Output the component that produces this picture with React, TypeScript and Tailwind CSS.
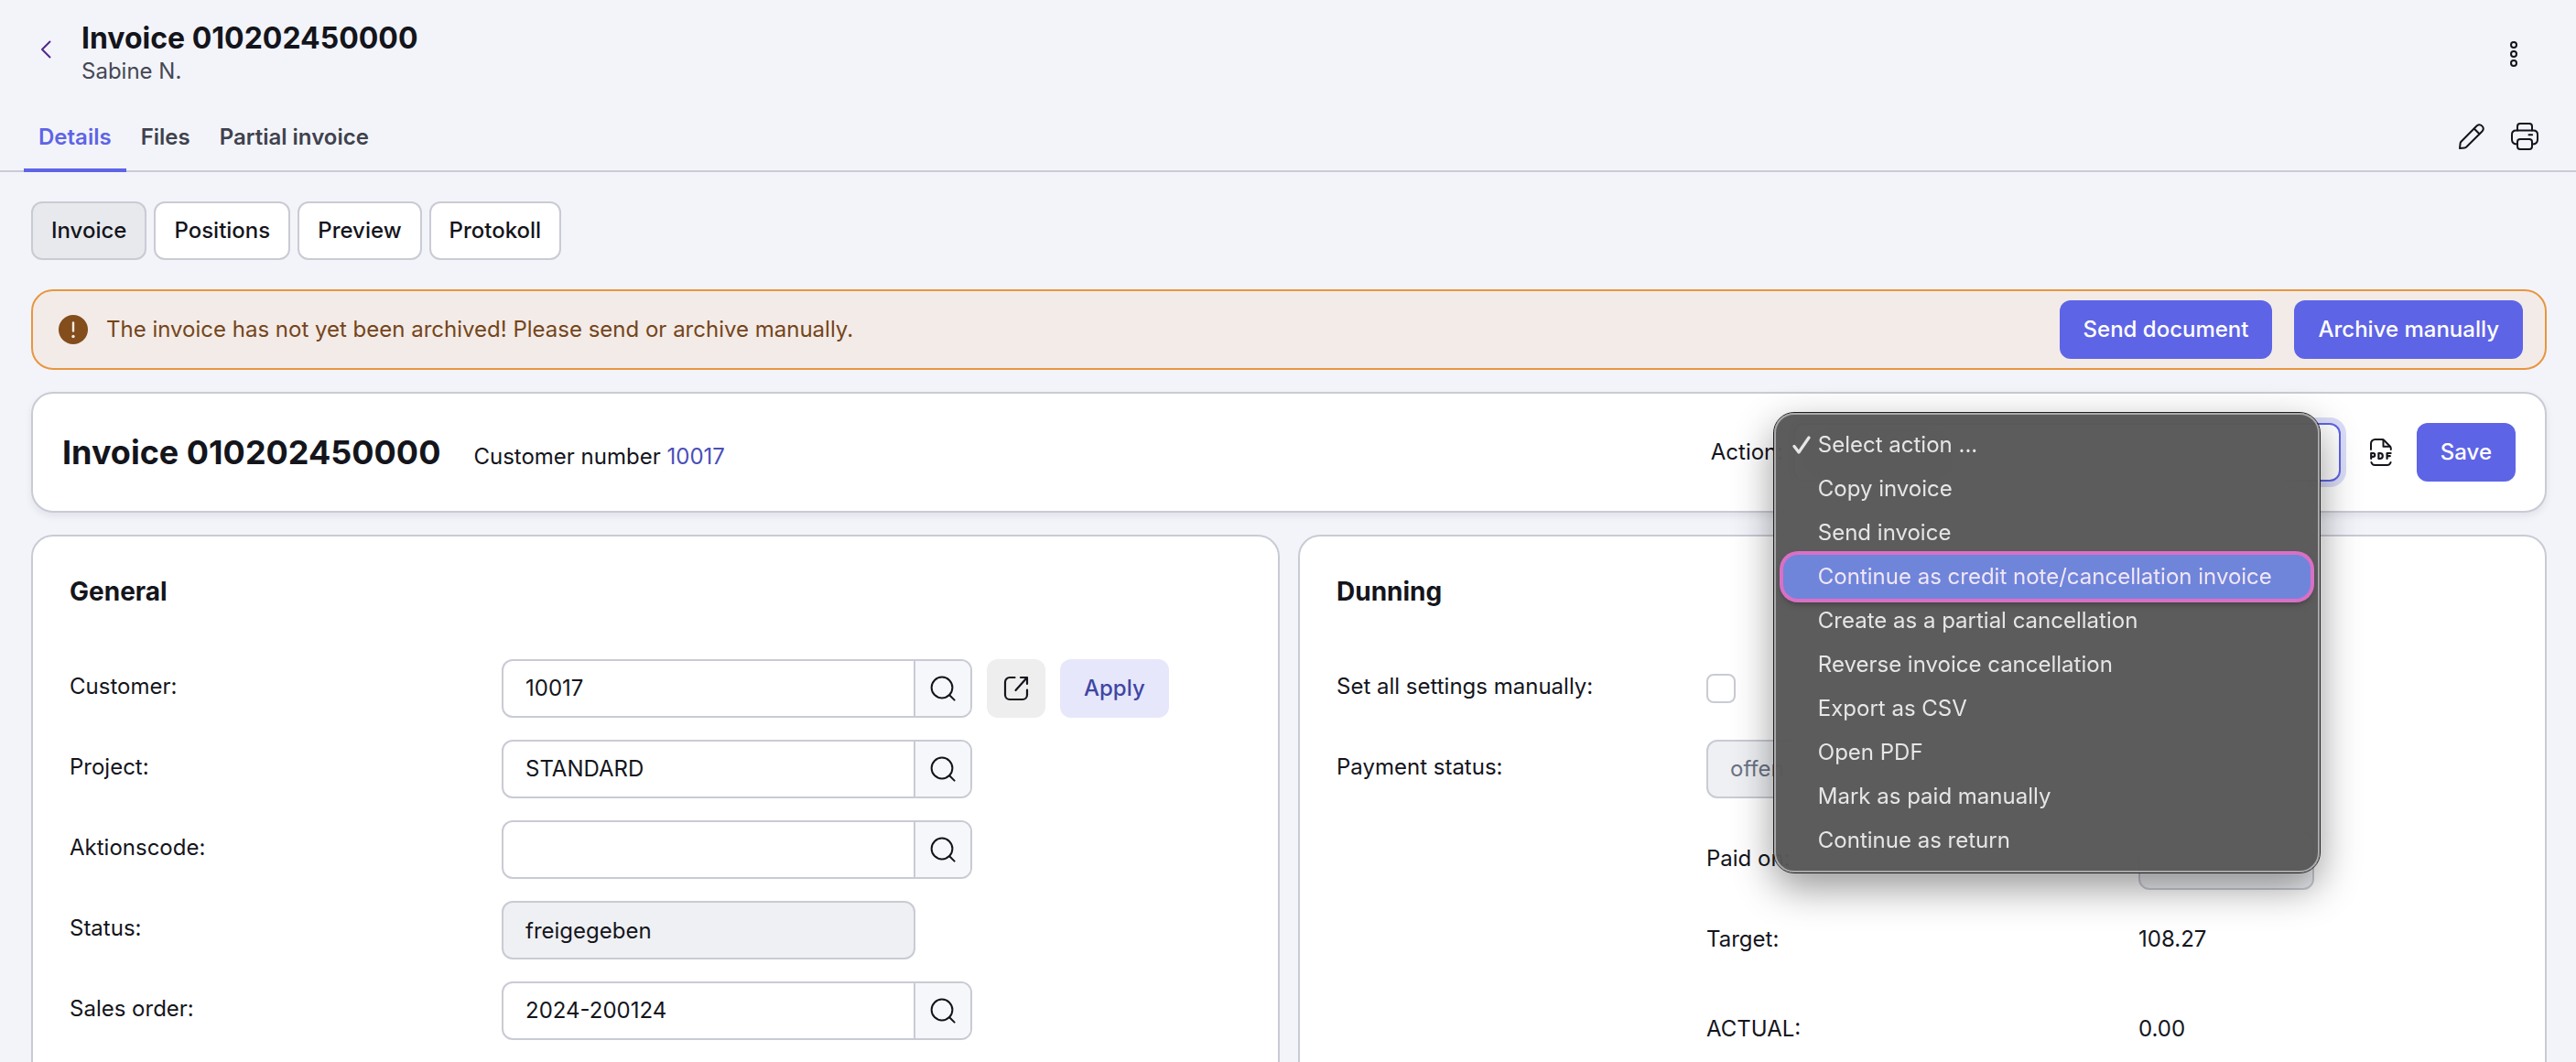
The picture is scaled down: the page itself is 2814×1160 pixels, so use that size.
import { useState } from 'react';
import type { ReactNode } from 'react';

const ACTIONS = [
  'Select action ...',
  'Copy invoice',
  'Send invoice',
  'Continue as credit note/cancellation invoice',
  'Create as a partial cancellation',
  'Reverse invoice cancellation',
  'Export as CSV',
  'Open PDF',
  'Mark as paid manually',
  'Continue as return',
];

const TABS     = ['Details', 'Files', 'Partial invoice'];
const SUB_TABS = ['Invoice', 'Positions', 'Preview', 'Protokoll'];

const primaryBtn = 'h-16 px-[26px] rounded-xl bg-[#5e64e6] text-white font-medium';
const labelCls   = 'leading-[60px] self-start';

const SearchIcon = () => (
  <svg viewBox="0 0 28 28" className="w-7 h-7" fill="none" stroke="#14151c" strokeWidth="2" strokeLinecap="round">
    <circle cx="13" cy="13" r="11.4" />
    <path d="M21.2 21.2L26.6 26.6" />
  </svg>
);

const OpenIcon = () => (
  <svg viewBox="0 0 28 28" className="w-7 h-7" fill="none" stroke="#14151c" strokeWidth="2.2" strokeLinecap="round" strokeLinejoin="round">
    <path d="M12.5 2H7a5 5 0 0 0-5 5v14a5 5 0 0 0 5 5h14a5 5 0 0 0 5-5v-5.5" />
    <path d="M19 2h7v7M26 2L13.5 16" />
  </svg>
);

const PencilIcon = () => (
  <svg viewBox="0 0 28 28" className="w-7 h-7" fill="none" stroke="#14151c" strokeWidth="2" strokeLinecap="round" strokeLinejoin="round">
    <path d="M1 27l.6-5.4c.1-.8.4-1.4.9-1.9L19.800 2.300a4.200 4.200 0 0 1 5.900 5.900L8.300 25.500c-.5.5-1.100.8-1.900.9L1 27z" />
    <path d="M16.700 5.500l5.800 5.800" />
  </svg>
);

const PrinterIcon = () => (
  <svg viewBox="0 0 30 30" className="w-[30px] h-[30px]" fill="none" stroke="#14151c" strokeWidth="2" strokeLinecap="round" strokeLinejoin="round">
    <path d="M7 8.500V4a3 3 0 0 1 3-3h10a3 3 0 0 1 3 3v4.500" />
    <path d="M7 23.500c-3.400 0-6-1.700-6-5v-5.500c0-2.800 1.700-4.500 4.500-4.500h19c2.800 0 4.500 1.700 4.500 4.500v5.500c0 3.300-2.600 5-6 5" />
    <rect x="7" y="18" width="16" height="11" rx="3" />
    <path d="M19.500 13.200h3.600" />
  </svg>
);

const PdfIcon = () => (
  <svg viewBox="0 0 24 30" className="w-6 h-[30px]" fill="none" stroke="#14151c" strokeWidth="2" strokeLinecap="round" strokeLinejoin="round">
    <path d="M1 12V5.500a4.500 4.500 0 0 1 4.500-4.500h7.500c1 0 1.700.3 2.400 1l6.200 6.200c.8.8 1.200 1.600 1.200 2.600V12" />
    <path d="M14.500 1.500v7.300h7.500" />
    <path d="M1.400 26c.6 2 1.900 2.900 3.800 2.900h13.600c1.900 0 3.200-.9 3.800-2.900" />
    <g strokeWidth="2.200">
      <path d="M1.200 22v-6h2.100a1.900 1.900 0 0 1 0 3.900H1.200" />
      <path d="M9.400 16v6h1.400c1.900 0 3-1.100 3-3s-1.100-3-3-3H9.400z" />
      <path d="M18.600 22v-6h4M18.600 19.200h3.200" />
    </g>
  </svg>
);

const Lookup = ({ id, value }: { id: string; value: string }) => (
  <div className="flex w-[514px] h-16 border-2 border-[#c9cbd4] rounded-xl overflow-hidden bg-white">
    <input id={id} defaultValue={value} className="flex-1 min-w-0 px-6 outline-none" />
    <button aria-label="Search" className="w-[62px] flex items-center justify-center bg-[#f6f7fa] border-l-2 border-[#c9cbd4]">
      <SearchIcon />
    </button>
  </div>
);

const Row = ({ id, label, children }: { id: string; label: string; children: ReactNode }) => (
  <div className="grid grid-cols-[472px_1fr]">
    <label htmlFor={id} className={labelCls}>{label}</label>
    <div className="flex gap-4">{children}</div>
  </div>
);

const ActionMenu = ({ selected, onSelect }: { selected: string; onSelect: (a: string) => void }) => (
  <ul
    role="listbox"
    aria-label="Action"
    className="absolute z-10 right-[23px] -top-[11px] w-[596px] py-[9px] rounded-[22px] bg-[#535353]/95 backdrop-blur-xl border-2 border-[#a9a9ac] outline-1 outline-[#1f1f1f] shadow-[0_16px_44px_rgba(0,0,0,0.42)] text-[#e6e6e6]"
  >
    {ACTIONS.map((a, n) => (
      <li
        key={a}
        role="option"
        aria-selected={a === selected}
        onClick={() => onSelect(a)}
        className={
          n === 3
            ? 'relative flex items-center h-12 mx-2 pl-[38px] rounded-2xl bg-[#6f85da] text-[#f1e6f6] ring-4 ring-[#da6fc6] shadow-[0_4px_8px_rgba(0,0,0,0.5)]'
            : 'relative flex items-center h-12 mx-2 pl-[38px]'
        }
      >
        {a === selected && (
          <svg viewBox="0 0 20 20" className="absolute left-[10px] w-5 h-5" fill="none" stroke="#e6e6e6" strokeWidth="3.2" strokeLinecap="round" strokeLinejoin="round">
            <path d="M2 11.500L7 18L18 2" />
          </svg>
        )}
        {a}
      </li>
    ))}
  </ul>
);

const App = () => {
  const [tab,    setTab]    = useState('Details');
  const [subTab, setSubTab] = useState('Invoice');
  const [action, setAction] = useState(ACTIONS[0]);

  return (
    <div className="h-screen overflow-hidden bg-[#f3f4fa] text-[#14151c] text-[24px] leading-8 font-['Inter',sans-serif]">
      {/* Header */}
      <header className="flex items-start justify-between pl-[43px] pr-[62px] pt-6 h-[112px]">
        <div className="flex">
          <a href="#back" aria-label="Back" className="w-[46px] pt-5">
            <svg viewBox="0 0 14 20" className="w-[14px] h-5" fill="none" stroke="#52268f" strokeWidth="2" strokeLinecap="round" strokeLinejoin="round">
              <path d="M11.500 1.500L3 10l8.500 8.500" />
            </svg>
          </a>
          <div>
            <h1 className="text-[32px] leading-9 font-bold">Invoice 010202450000</h1>
            <p className="mt-[2px] text-[#454853]">Sabine N.</p>
          </div>
        </div>
        <button aria-label="More" className="mt-5">
          <svg viewBox="0 0 12 30" className="w-3 h-[30px]" fill="none" stroke="#14151c" strokeWidth="2">
            <circle cx="6" cy="5" r="3" />
            <circle cx="6" cy="15" r="3" />
            <circle cx="6" cy="25" r="3" />
          </svg>
        </button>
      </header>

      {/* Tabs */}
      <nav className="flex justify-between h-[76px] pl-[26px] pr-[41px] border-b-2 border-[#c9cbd4]">
        <div className="flex">
          {TABS.map((t) => (
            <button
              key={t}
              onClick={() => setTab(t)}
              className={
                t === tab
                  ? 'h-[76px] px-4 pt-[3px] border-b-4 border-[#5e64e6] font-semibold text-[#5e64e6]'
                  : 'h-[76px] px-4 pt-[3px] border-b-4 border-transparent font-semibold text-[#3f424d]'
              }
            >
              {t}
            </button>
          ))}
        </div>
        <div className="flex items-center gap-[29px]">
          <button aria-label="Edit"><PencilIcon /></button>
          <button aria-label="Print"><PrinterIcon /></button>
        </div>
      </nav>

      <main className="pl-[34px] pr-8 pt-8">
        <div className="flex gap-2">
          {SUB_TABS.map((t) => (
            <button
              key={t}
              onClick={() => setSubTab(t)}
              className={
                t === subTab
                  ? 'h-16 px-5 rounded-xl border-2 border-[#c9cbd4] bg-[#e8e9ed] font-medium'
                  : 'h-16 px-5 rounded-xl border-2 border-[#c9cbd4] bg-white font-medium'
              }
            >
              {t}
            </button>
          ))}
        </div>

        {/* Archive warning */}
        <div role="alert" className="mt-8 h-[88px] flex items-center pl-7 pr-6 rounded-3xl border-2 border-[#e8963f] bg-[#f3ebe8] text-[#74451a]">
          <svg viewBox="0 0 32 32" className="w-8 h-8 mr-5">
            <circle cx="16" cy="16" r="16" fill="#834d1c" />
            <path d="M16 8.500v9" stroke="#f3ebe8" strokeWidth="2.4" strokeLinecap="round" />
            <circle cx="16" cy="23.500" r="1.700" fill="#f3ebe8" />
          </svg>
          <p className="flex-1">The invoice has not yet been archived! Please send or archive manually.</p>
          <div className="flex gap-6">
            <button className={primaryBtn}>Send document</button>
            <button className={primaryBtn}>Archive manually</button>
          </div>
        </div>

        {/* Title bar with actions */}
        <section className="relative z-10 mt-6 h-[132px] flex items-center justify-between pl-8 pr-8 rounded-3xl border-2 border-[#c9cbd4] bg-white shadow-[0_4px_8px_rgba(20,21,28,0.07)]">
          <div className="flex items-baseline gap-9">
            <h2 className="text-[36px] leading-10 font-bold">Invoice 010202450000</h2>
            <p>Customer number <a href="#customer" className="text-[#4a4fb8]">10017</a></p>
          </div>
          <div className="flex items-center">
            <label htmlFor="action" className="w-[90px]">Action:</label>
            <div className="relative">
              <select
                id="action"
                value={action}
                onChange={(e) => setAction(e.target.value)}
                className="w-[598px] h-16 px-6 appearance-none rounded-xl border-2 border-[#5e64e6] bg-white ring-[6px] ring-[#dcddf8] outline-none"
              >
                {ACTIONS.map((a) => <option key={a}>{a}</option>)}
              </select>
              <ActionMenu selected={action} onSelect={setAction} />
            </div>
            <button aria-label="PDF" className="ml-8 mr-[27px]"><PdfIcon /></button>
            <button className={primaryBtn}>Save</button>
          </div>
        </section>

        <div className="mt-6 grid grid-cols-2 gap-5">
          {/* General */}
          <section className="pl-10 pr-8 pt-10 pb-24 rounded-3xl border-2 border-[#c9cbd4] bg-white">
            <h3 className="text-[28px] leading-10 font-bold mb-[54px]">General</h3>
            <div className="flex flex-col gap-6">
              <Row id="customer" label="Customer:">
                <Lookup id="customer" value="10017" />
                <button aria-label="Open customer" className="w-16 h-16 flex items-center justify-center rounded-xl bg-[#eeeeee]">
                  <OpenIcon />
                </button>
                <button className="h-16 px-[26px] rounded-xl bg-[#e6e7fb] text-[#4146a3] font-medium">Apply</button>
              </Row>
              <Row id="project" label="Project:"><Lookup id="project" value="STANDARD" /></Row>
              <Row id="code" label="Aktionscode:"><Lookup id="code" value="" /></Row>
              <Row id="status" label="Status:">
                <input id="status" readOnly value="freigegeben" className="w-[452px] h-16 px-6 rounded-xl border-2 border-[#c9cbd4] bg-[#eff0f3] outline-none" />
              </Row>
              <Row id="order" label="Sales order:"><Lookup id="order" value="2024-200124" /></Row>
            </div>
          </section>

          {/* Dunning */}
          <section className="pl-10 pr-8 pt-10 pb-24 rounded-3xl border-2 border-[#c9cbd4] bg-white">
            <h3 className="text-[28px] leading-10 font-bold mb-[54px]">Dunning</h3>
            <div className="grid grid-cols-[404px_1fr] gap-y-6">
              <label htmlFor="manual" className={labelCls}>Set all settings manually:</label>
              <div className="h-16 flex items-center">
                <input id="manual" type="checkbox" className="w-8 h-8 appearance-none rounded-lg border-2 border-[#c9cbd4] bg-white" />
              </div>
              <label htmlFor="payment" className={labelCls}>Payment status:</label>
              <div>
                <select id="payment" disabled className="w-[412px] h-16 px-6 appearance-none rounded-xl border-2 border-[#c9cbd4] bg-[#eff0f3] text-[#6b7386] opacity-100">
                  <option>offen</option>
                </select>
                <div className="mt-9 grid grid-cols-[472px_1fr]">
                  <label htmlFor="paid" className={labelCls}>Paid on:</label>
                  <input id="paid" readOnly className="w-[192px] h-16 px-6 rounded-xl border-2 border-[#c9cbd4] bg-[#eff0f3] outline-none" />
                  <span className="mt-6 leading-[60px]">Target:</span>
                  <span className="mt-6 leading-[60px]">108.27</span>
                  <span className="mt-[38px] leading-[60px]">ACTUAL:</span>
                  <span className="mt-[38px] leading-[60px]">0.00</span>
                </div>
              </div>
            </div>
          </section>
        </div>
      </main>
    </div>
  );
};

export default App;
